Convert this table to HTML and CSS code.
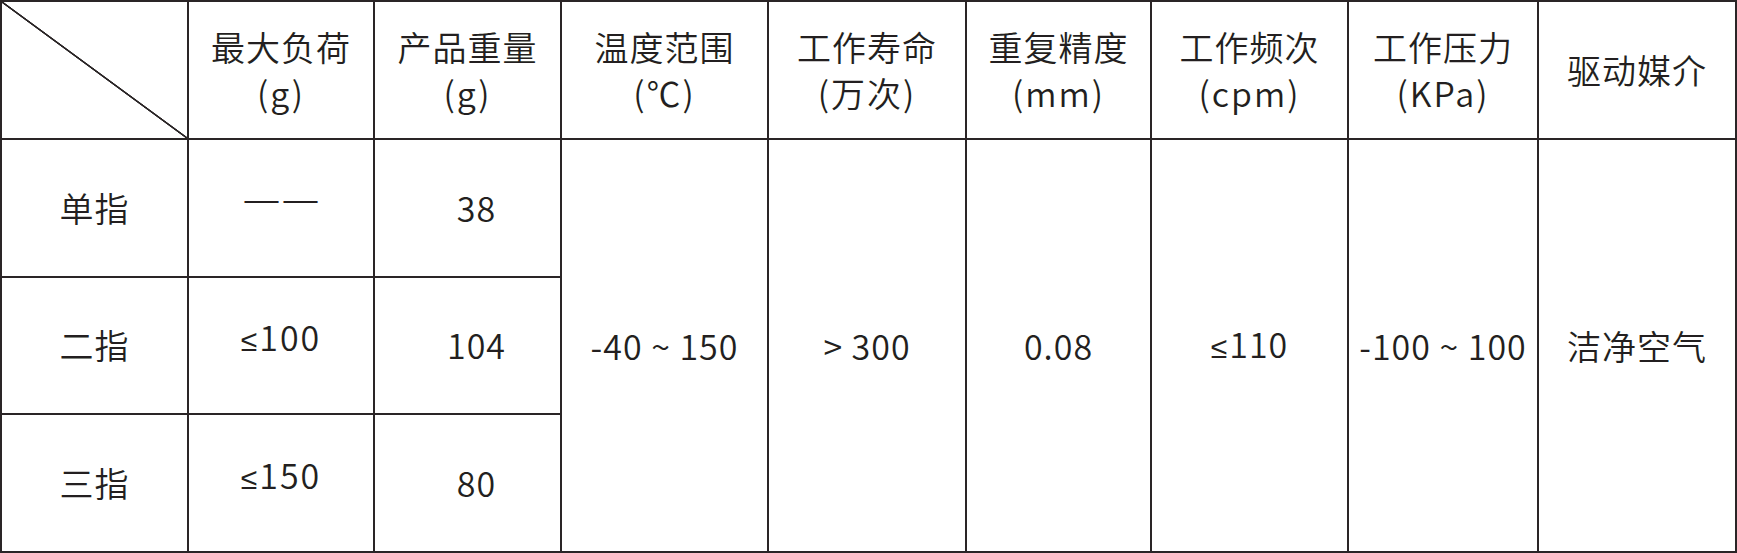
FILE: index.html
```html
<!DOCTYPE html>
<html lang="zh-CN">
<head>
<meta charset="utf-8">
<title>规格参数</title>
<link rel="stylesheet" href="styles.css">
</head>
<body>
<table class="spec">
  <colgroup>
    <col class="c1"><col class="c2"><col class="c3"><col class="c4"><col class="c5"><col class="c6"><col class="c7"><col class="c8"><col class="c9">
  </colgroup>
  <thead>
    <tr class="head">
      <th class="corner"></th>
      <th><span class="l1">最大负荷</span><span class="l2">(g)</span></th>
      <th><span class="l1">产品重量</span><span class="l2">(g)</span></th>
      <th><span class="l1">温度范围</span><span class="l2">(℃)</span></th>
      <th><span class="l1">工作寿命</span><span class="l2">(万次)</span></th>
      <th><span class="l1">重复精度</span><span class="l2">(mm)</span></th>
      <th><span class="l1">工作频次</span><span class="l2">(cpm)</span></th>
      <th><span class="l1">工作压力</span><span class="l2">(KPa)</span></th>
      <th><span class="l1">驱动媒介</span></th>
    </tr>
  </thead>
  <tbody>
    <tr>
      <td>单指</td>
      <td><span class="dash">——</span></td>
      <td class="wt">38</td>
      <td rowspan="3">-40 ~ 150</td>
      <td rowspan="3">&gt; 300</td>
      <td rowspan="3">0.08</td>
      <td rowspan="3"><span class="sym">≤</span>110</td>
      <td rowspan="3" class="tight">-100 ~ 100</td>
      <td rowspan="3">洁净空气</td>
    </tr>
    <tr>
      <td>二指</td>
      <td><span class="le"><span class="sym">≤</span>100</span></td>
      <td class="wt">104</td>
    </tr>
    <tr>
      <td>三指</td>
      <td><span class="le"><span class="sym">≤</span>150</span></td>
      <td class="wt">80</td>
    </tr>
  </tbody>
</table>
</body>
</html>
```

FILE: styles.css
```css
html, body {
  margin: 0;
  padding: 0;
  background: #ffffff;
}

.spec {
  width: 1737px;
  height: 553px;
  border-collapse: collapse;
  table-layout: fixed;
  font-family: "Noto Sans CJK SC", "Noto Sans", sans-serif;
  font-size: 34px;
  font-weight: 350;
  color: #231f20;
}

.c1 { width: 187px; }
.c2 { width: 186px; }
.c3 { width: 187px; }
.c4 { width: 207px; }
.c5 { width: 198px; }
.c6 { width: 185px; }
.c7 { width: 197px; }
.c8 { width: 190px; }
.c9 { width: 198px; }

.spec th,
.spec td {
  border: 2px solid #2a2526;
  padding: 0;
  text-align: center;
  vertical-align: middle;
  font-weight: 350;
  line-height: 44px;
  white-space: nowrap;
}

.head { height: 138px; }
.spec tbody tr { height: 137px; }

.l1, .l2 { display: block; }
.l1 { letter-spacing: 1px; }
.l2 { letter-spacing: 2px; padding-top: 2px; }

.corner {
  background: linear-gradient(to top right,
    transparent calc(50% - 1.2px),
    #2a2526 calc(50% - 0.6px),
    #2a2526 calc(50% + 0.6px),
    transparent calc(50% + 1.2px));
}

.wt { padding-left: 18px !important; }

.dash {
  display: inline-block;
  position: relative;
  top: -10px;
  font-family: "Noto Sans", "Liberation Sans", sans-serif;
  font-size: 37px;
  font-weight: 300;
  letter-spacing: 2px;
  margin-left: 2px;
}

.le {
  display: inline-block;
  position: relative;
  top: -7px;
  letter-spacing: 2px;
}

.sym {
  font-family: "Noto Sans", "Liberation Sans", sans-serif;
  font-weight: 300;
  font-size: 30px;
  letter-spacing: 0;
  margin-right: 2px;
}

.spec td { letter-spacing: 1px; }
.tight { letter-spacing: 0; }
```
